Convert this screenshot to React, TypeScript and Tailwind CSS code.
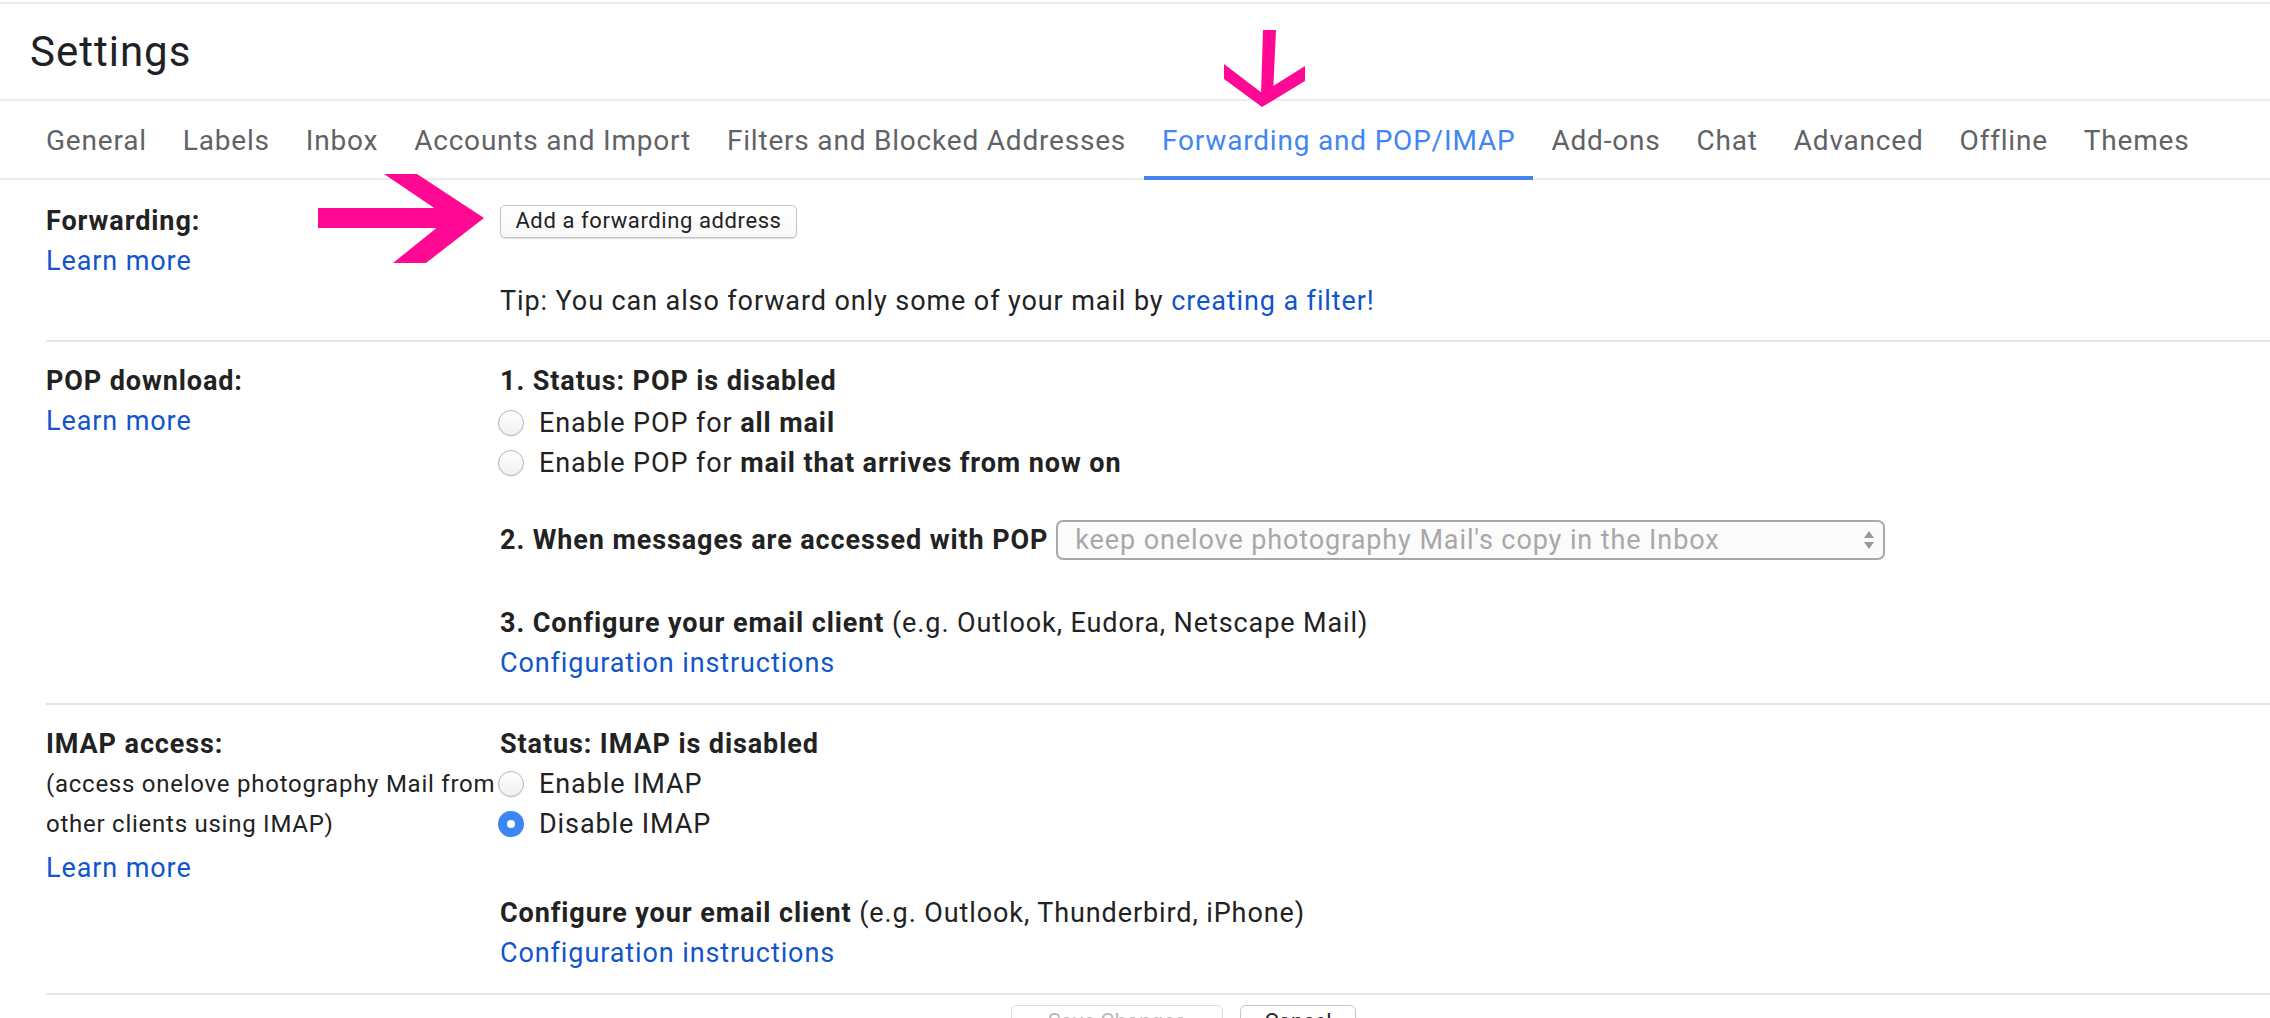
import React from "react";

const tabs = [
  "General",
  "Labels",
  "Inbox",
  "Accounts and Import",
  "Filters and Blocked Addresses",
  "Forwarding and POP/IMAP",
  "Add-ons",
  "Chat",
  "Advanced",
  "Offline",
  "Themes",
];

const Radio = ({ checked }: { checked?: boolean }) =>
  checked ? (
    <span className="w-[26px] h-[26px] rounded-full bg-[#3b86f0] flex items-center justify-center shrink-0">
      <span className="w-[8px] h-[8px] rounded-full bg-white" />
    </span>
  ) : (
    <span className="w-[26px] h-[26px] rounded-full border border-[#b5b5b5] bg-gradient-to-b from-white to-[#f0f0f0] shadow-[0_1px_1px_rgba(0,0,0,0.08)] shrink-0" />
  );

const Link = ({ children }: { children: React.ReactNode }) => (
  <span className="text-[#1155cc] cursor-pointer">{children}</span>
);

export default function App() {
  return (
    <div className="relative min-h-screen bg-white overflow-hidden text-[#222] font-['Roboto',sans-serif]">
      {/* top rule */}
      <div className="pt-[2px]">
        <div className="h-[2px] bg-[#ececec]" />
      </div>

      {/* header */}
      <div className="h-[97px] flex items-center pl-[30px] border-b-2 border-[#ececec]">
        <h1 className="text-[42px] tracking-[1px] text-[#202124]">Settings</h1>
      </div>

      {/* tabs */}
      <div className="flex pl-[28px] border-b-2 border-[#ededed]">
        {tabs.map((t) => {
          const active = t === "Forwarding and POP/IMAP";
          return (
            <div
              key={t}
              className={
                active
                  ? "h-[79px] -mb-[2px] px-[18px] pt-[5px] flex items-center border-b-4 border-[#4285f4] text-[#4285f4] text-[28px] tracking-[0.8px]"
                  : "h-[79px] -mb-[2px] px-[18px] pt-[5px] flex items-center border-b-4 border-transparent text-[#5f6368] text-[28px] tracking-[0.8px]"
              }
            >
              {t}
            </div>
          );
        })}
      </div>

      {/* content */}
      <div className="ml-[46px] text-[27px] leading-[40px] tracking-[0.9px]">
        {/* Forwarding */}
        <div className="grid grid-cols-[454px_1fr] pt-[21px] pb-[19px] border-b-2 border-[#e6e6e6]">
          <div>
            <div className="font-bold">Forwarding:</div>
            <Link>Learn more</Link>
          </div>
          <div>
            <div className="h-[40px] flex items-center">
              <button className="h-[33px] w-[297px] rounded-[5px] border border-[#c4c4c4] bg-gradient-to-b from-white to-[#f7f7f7] shadow-[0_1px_1px_rgba(0,0,0,0.15)] text-[22px] tracking-[0.6px] leading-none text-[#222]">
                Add a forwarding address
              </button>
            </div>
            <div className="h-[40px]" />
            <div>
              Tip: You can also forward only some of your mail by <Link>creating a filter!</Link>
            </div>
          </div>
        </div>

        {/* POP */}
        <div className="grid grid-cols-[454px_1fr] pt-[19px] pb-[20px] border-b-2 border-[#e6e6e6]">
          <div>
            <div className="font-bold">POP download:</div>
            <Link>Learn more</Link>
          </div>
          <div>
            <div className="font-bold">1. Status: POP is disabled</div>
            <div className="mt-[2px] flex items-center gap-[15px] -ml-[2px]">
              <Radio />
              <span>
                Enable POP for <b>all mail</b>
              </span>
            </div>
            <div className="flex items-center gap-[15px] -ml-[2px]">
              <Radio />
              <span>
                Enable POP for <b>mail that arrives from now on</b>
              </span>
            </div>
            <div className="mt-[37px] flex items-center gap-[8px]">
              <span className="font-bold">2. When messages are accessed with POP</span>
              <div className="w-[829px] h-[40px] rounded-[7px] border-2 border-[#a9a9a9] bg-[#fbfbfb] flex items-center justify-between pl-[17px] pr-[8px] text-[#a8a8a8]">
                <span>keep onelove photography Mail's copy in the Inbox</span>
                <svg width="12" height="24" viewBox="0 0 12 24">
                  <path d="M6 3 L11 10 H1 Z" fill="#9a9a9a" />
                  <path d="M6 21 L11 14 H1 Z" fill="#9a9a9a" />
                </svg>
              </div>
            </div>
            <div className="mt-[43px]">
              <b>3. Configure your email client</b> (e.g. Outlook, Eudora, Netscape Mail)
            </div>
            <Link>Configuration instructions</Link>
          </div>
        </div>

        {/* IMAP */}
        <div className="grid grid-cols-[454px_1fr] pt-[19px] pb-[20px] border-b-2 border-[#e6e6e6]">
          <div>
            <div className="font-bold">IMAP access:</div>
            <div className="text-[24px] tracking-[0.75px] whitespace-nowrap">(access onelove photography Mail from</div>
            <div className="text-[24px] tracking-[0.75px]">other clients using IMAP)</div>
            <div className="mt-[4px]">
              <Link>Learn more</Link>
            </div>
          </div>
          <div>
            <div className="font-bold">Status: IMAP is disabled</div>
            <div className="flex items-center gap-[15px] -ml-[2px]">
              <Radio />
              <span>Enable IMAP</span>
            </div>
            <div className="flex items-center gap-[15px] -ml-[2px]">
              <Radio checked />
              <span>Disable IMAP</span>
            </div>
            <div className="mt-[49px]">
              <b>Configure your email client</b> (e.g. Outlook, Thunderbird, iPhone)
            </div>
            <Link>Configuration instructions</Link>
          </div>
        </div>

        {/* footer buttons */}
        <div className="pt-[10px] pl-[965px] flex gap-[17px] tracking-normal">
          <button className="w-[212px] h-[44px] rounded-[6px] border border-[#dcdcdc] bg-white flex items-start justify-center pt-[3px] text-[22px] leading-[26px] text-[#b8b8b8]">
            Save Changes
          </button>
          <button className="w-[116px] h-[44px] rounded-[6px] border border-[#c4c4c4] bg-white flex items-start justify-center pt-[3px] text-[22px] leading-[26px] text-[#222]">
            Cancel
          </button>
        </div>
      </div>

      {/* annotation arrows */}
      <svg
        className="absolute left-0 top-0 pointer-events-none"
        width="2270"
        height="1018"
        viewBox="0 0 2270 1018"
      >
        <polygon points="1263,30 1276,30 1273,94 1261,94" fill="#ff0893" />
        <polygon points="1224,64 1262,93 1305,66 1305,81 1262,107 1224,79" fill="#ff0893" />
        <polygon points="318,208 452,208 452,228 318,228" fill="#ff0893" />
        <polygon points="384,174 417,174 484,218 426,263 393,263 449,218" fill="#ff0893" />
      </svg>
    </div>
  );
}
